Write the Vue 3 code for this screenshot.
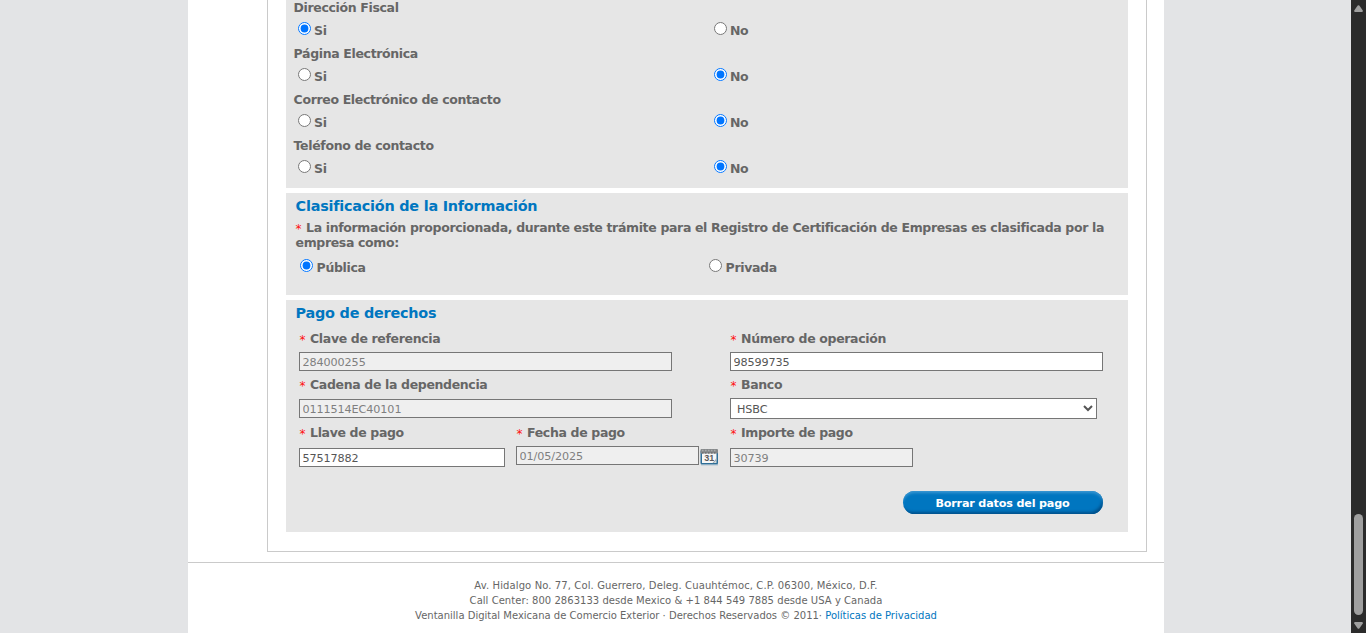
<script setup>
import { ref } from 'vue'

const contactOptions = ref([
  { id: 'fiscal', label: 'Dirección Fiscal', value: 'si' },
  { id: 'pagina', label: 'Página Electrónica', value: 'no' },
  { id: 'correo', label: 'Correo Electrónico de contacto', value: 'no' },
  { id: 'telefono', label: 'Teléfono de contacto', value: 'no' }
])
const clasificacion = ref('publica')
const pago = ref({
  clave: '284000255',
  operacion: '98599735',
  cadena: '0111514EC40101',
  banco: 'HSBC',
  llave: '57517882',
  fecha: '01/05/2025',
  importe: '30739'
})
</script>

<template>
  <div class="viewport">
    <div class="page">
      <main class="sheet">
        <div class="frame">
          <section class="panel contact">
            <div v-for="o in contactOptions" :key="o.id" class="question">
              <div class="label q-label"><span>{{ o.label }}</span></div>
              <div class="choices">
                <label class="choice"><input v-model="o.value" type="radio" :name="o.id" value="si" /><span>Si</span></label>
                <label class="choice"><input v-model="o.value" type="radio" :name="o.id" value="no" /><span>No</span></label>
              </div>
            </div>
          </section>

          <section class="panel clasif">
            <h2>Clasificación de la Información</h2>
            <p class="label statement"><i>*</i> La información proporcionada, durante este trámite para el Registro de Certificación de Empresas es clasificada por la<br />empresa como:</p>
            <div class="choices">
              <label class="choice"><input v-model="clasificacion" type="radio" name="clasif" value="publica" /><span>Pública</span></label>
              <label class="choice"><input v-model="clasificacion" type="radio" name="clasif" value="privada" /><span>Privada</span></label>
            </div>
          </section>

          <section class="panel pago">
            <h2>Pago de derechos</h2>
            <div class="fields">
              <div class="field r1">
                <div class="label"><i>*</i> Clave de referencia</div>
                <input v-model="pago.clave" class="wide" type="text" disabled />
              </div>
              <div class="field r1">
                <div class="label"><i>*</i> Número de operación</div>
                <input v-model="pago.operacion" class="wide" type="text" />
              </div>
              <div class="field r2">
                <div class="label"><i>*</i> Cadena de la dependencia</div>
                <input v-model="pago.cadena" class="wide" type="text" disabled />
              </div>
              <div class="field">
                <div class="label"><i>*</i> Banco</div>
                <select v-model="pago.banco"><option>HSBC</option></select>
              </div>
              <div class="pair">
                <div class="field llave">
                  <div class="label"><i>*</i> Llave de pago</div>
                  <input v-model="pago.llave" type="text" />
                </div>
                <div class="field fecha">
                  <div class="label"><i>*</i> Fecha de pago</div>
                  <div class="date">
                    <input v-model="pago.fecha" type="text" disabled />
                    <svg class="cal" width="19" height="18" viewBox="0 0 19 18">
                      <rect x="0.5" y="2" width="17.5" height="14.5" rx="1.5" fill="#2f6f98" />
                      <path d="M1 16.8H18" stroke="#8fb0c5" />
                      <path d="M2 5H16.5V12L13 15H2Z" fill="#f6f6f6" />
                      <path d="M16.5 11.5V15H12.5Z" fill="#d5dadd" />
                      <path d="M12.8 14.8Q15.5 14 16.4 10.5" fill="none" stroke="#9aa2a6" stroke-width="0.9" />
                      <rect x="0.5" y="1" width="17.5" height="4.5" rx="1" fill="#85888a" />
                      <path d="M2 2.5H17" stroke="#a8aaab" stroke-width="1.4" stroke-dasharray="1.5 1.5" />
                      <path d="M2 5H17" stroke="#5c5f61" stroke-dasharray="1.5 1.5" />
                      <text x="4.3" y="12.6" font-family="Liberation Sans, sans-serif" font-size="9" font-weight="700" fill="#5a5a5a">31</text>
                    </svg>
                  </div>
                </div>
              </div>
              <div class="field importe">
                <div class="label"><i>*</i> Importe de pago</div>
                <input v-model="pago.importe" type="text" disabled />
              </div>
            </div>
            <button type="button" class="clear">Borrar datos del pago</button>
          </section>
        </div>
        <footer>
          <div class="address">Av. Hidalgo No. 77, Col. Guerrero, Deleg. Cuauhtémoc, C.P. 06300, México, D.F.</div>
          <div class="phones">Call Center: 800 2863133 desde Mexico &amp; +1 844 549 7885 desde USA y Canada</div>
          <div>Ventanilla Digital Mexicana de Comercio Exterior · Derechos Reservados © 2011· <a>Políticas de Privacidad</a></div>
        </footer>
      </main>
    </div>
    <div class="scrollbar">
      <svg width="9" height="7" viewBox="0 0 9 7"><path d="M3.7 .6Q4.5 -.2 5.3 .6L8.8 5.6Q9 7 8 7H1Q0 7 .2 5.6Z" fill="#9f9f9f" /></svg>
      <div class="thumb"></div>
      <svg class="down" width="9" height="7" viewBox="0 0 9 7"><path d="M3.7 6.4Q4.5 7.2 5.3 6.4L8.8 1.4Q9 0 8 0H1Q0 0 .2 1.4Z" fill="#9f9f9f" /></svg>
    </div>
  </div>
</template>

<style>
body {
  margin: 0;
  overflow: hidden;
}
</style>

<style scoped>
* {
  box-sizing: border-box;
}
.viewport {
  display: flex;
  width: 1366px;
  height: 633px;
  overflow: hidden;
  background: #e3e4e6;
  font-family: Verdana, "DejaVu Sans", sans-serif;
  color: #666;
}
.page {
  width: 1351px;
  padding-left: 188px;
}
.sheet {
  width: 976px;
  height: 633px;
  background: #fff;
}
.frame {
  display: flex;
  flex-direction: column;
  gap: 5px;
  width: 880px;
  height: 552px;
  margin-left: 79px;
  padding: 0 18px;
  border: 1px solid #cacaca;
  border-top: 0;
}
.panel {
  width: 842px;
  background: #e6e6e6;
}
.label,
.choice {
  font-size: 12.5px;
  font-weight: 700;
  line-height: 15px;
  letter-spacing: -0.35px;
  white-space: nowrap;
}
.contact {
  height: 188px;
  padding-left: 7.6px;
}
.question {
  height: 46px;
}
.q-label {
  height: 22px;
}
.choices {
  display: grid;
  grid-template-columns: 416px 1fr;
  padding-left: 4.4px;
}
.choice {
  display: flex;
  align-items: flex-start;
  gap: 3px;
}
.choice input {
  width: 13px;
  height: 13px;
  margin: 0;
}
.choice span {
  margin-top: 1px;
}
h2 {
  margin: 0 0 0 9.6px;
  color: #0076c0;
  font-size: 14.4px;
  line-height: 18px;
  letter-spacing: -0.22px;
}
.clasif {
  height: 102px;
  padding-top: 4px;
}
.statement {
  margin: 5px 0 9px 9.5px;
}
.clasif .choices {
  grid-template-columns: 409px 1fr;
  padding-left: 14px;
}
.clasif .choice {
  gap: 3.6px;
}
i {
  position: relative;
  top: 1px;
  margin-right: 0.9px;
  color: #ff1010;
  font-size: 12px;
  font-style: normal;
  font-weight: 400;
  line-height: 0;
}
.pago {
  height: 232px;
  padding-top: 4px;
}
.fields {
  display: grid;
  grid-template-columns: 431px 373px;
  grid-template-rows: 46px 48px 60px;
  margin: 9px 0 0 13px;
}
.field .label {
  height: 21px;
  padding-left: 0.5px;
}
.field input,
select {
  display: block;
  width: 206px;
  height: 19px;
  padding: 2px 3px 0 2.5px;
  border: 1px solid #767676;
  border-radius: 0;
  background: #fff;
  color: #555;
  font-family: inherit;
  font-size: 11.2px;
  letter-spacing: -0.1px;
}
.field input:disabled {
  background: #efefef;
  color: #7f7f7f;
}
.field input.wide {
  width: 373px;
}
.r2 .label {
  height: 22px;
}
select {
  width: 367px;
  height: 21px;
  padding: 2px 3px 0 2px;
}
.pair {
  display: flex;
  gap: 11px;
}
.llave .label,
.importe .label {
  height: 23px;
}
.date {
  display: flex;
}
.fecha input,
.importe input {
  width: 183px;
}
.cal {
  margin: 2px 0 0 1px;
}
.clear {
  display: block;
  width: 200px;
  height: 23px;
  margin: 6px 25px 0 auto;
  padding: 2px 1px 0 0;
  border: 0;
  border-radius: 12px;
  background: #0076c0;
  box-shadow: inset 0 3px 3px -1px #3a97d2, inset -2px -3px 3px -1px #00508a;
  color: #fff;
  font: 700 11.2px Verdana, "DejaVu Sans", sans-serif;
  letter-spacing: -0.18px;
}
footer {
  margin-top: 10px;
  padding-top: 15px;
  border-top: 1px solid #cacaca;
  font-size: 10px;
  line-height: 15px;
  text-align: center;
  white-space: nowrap;
}
.address {
  letter-spacing: 0.11px;
}
.phones {
  letter-spacing: 0.04px;
}
footer a {
  color: #0076c0;
}
.scrollbar {
  display: flex;
  flex-direction: column;
  align-items: center;
  width: 15px;
  height: 633px;
  padding-top: 5px;
  background: #2b2b2b;
}
.thumb {
  width: 9px;
  height: 101px;
  margin-top: 502px;
  border-radius: 5px;
  background: #9f9f9f;
}
.down {
  margin-top: 7px;
}
</style>
